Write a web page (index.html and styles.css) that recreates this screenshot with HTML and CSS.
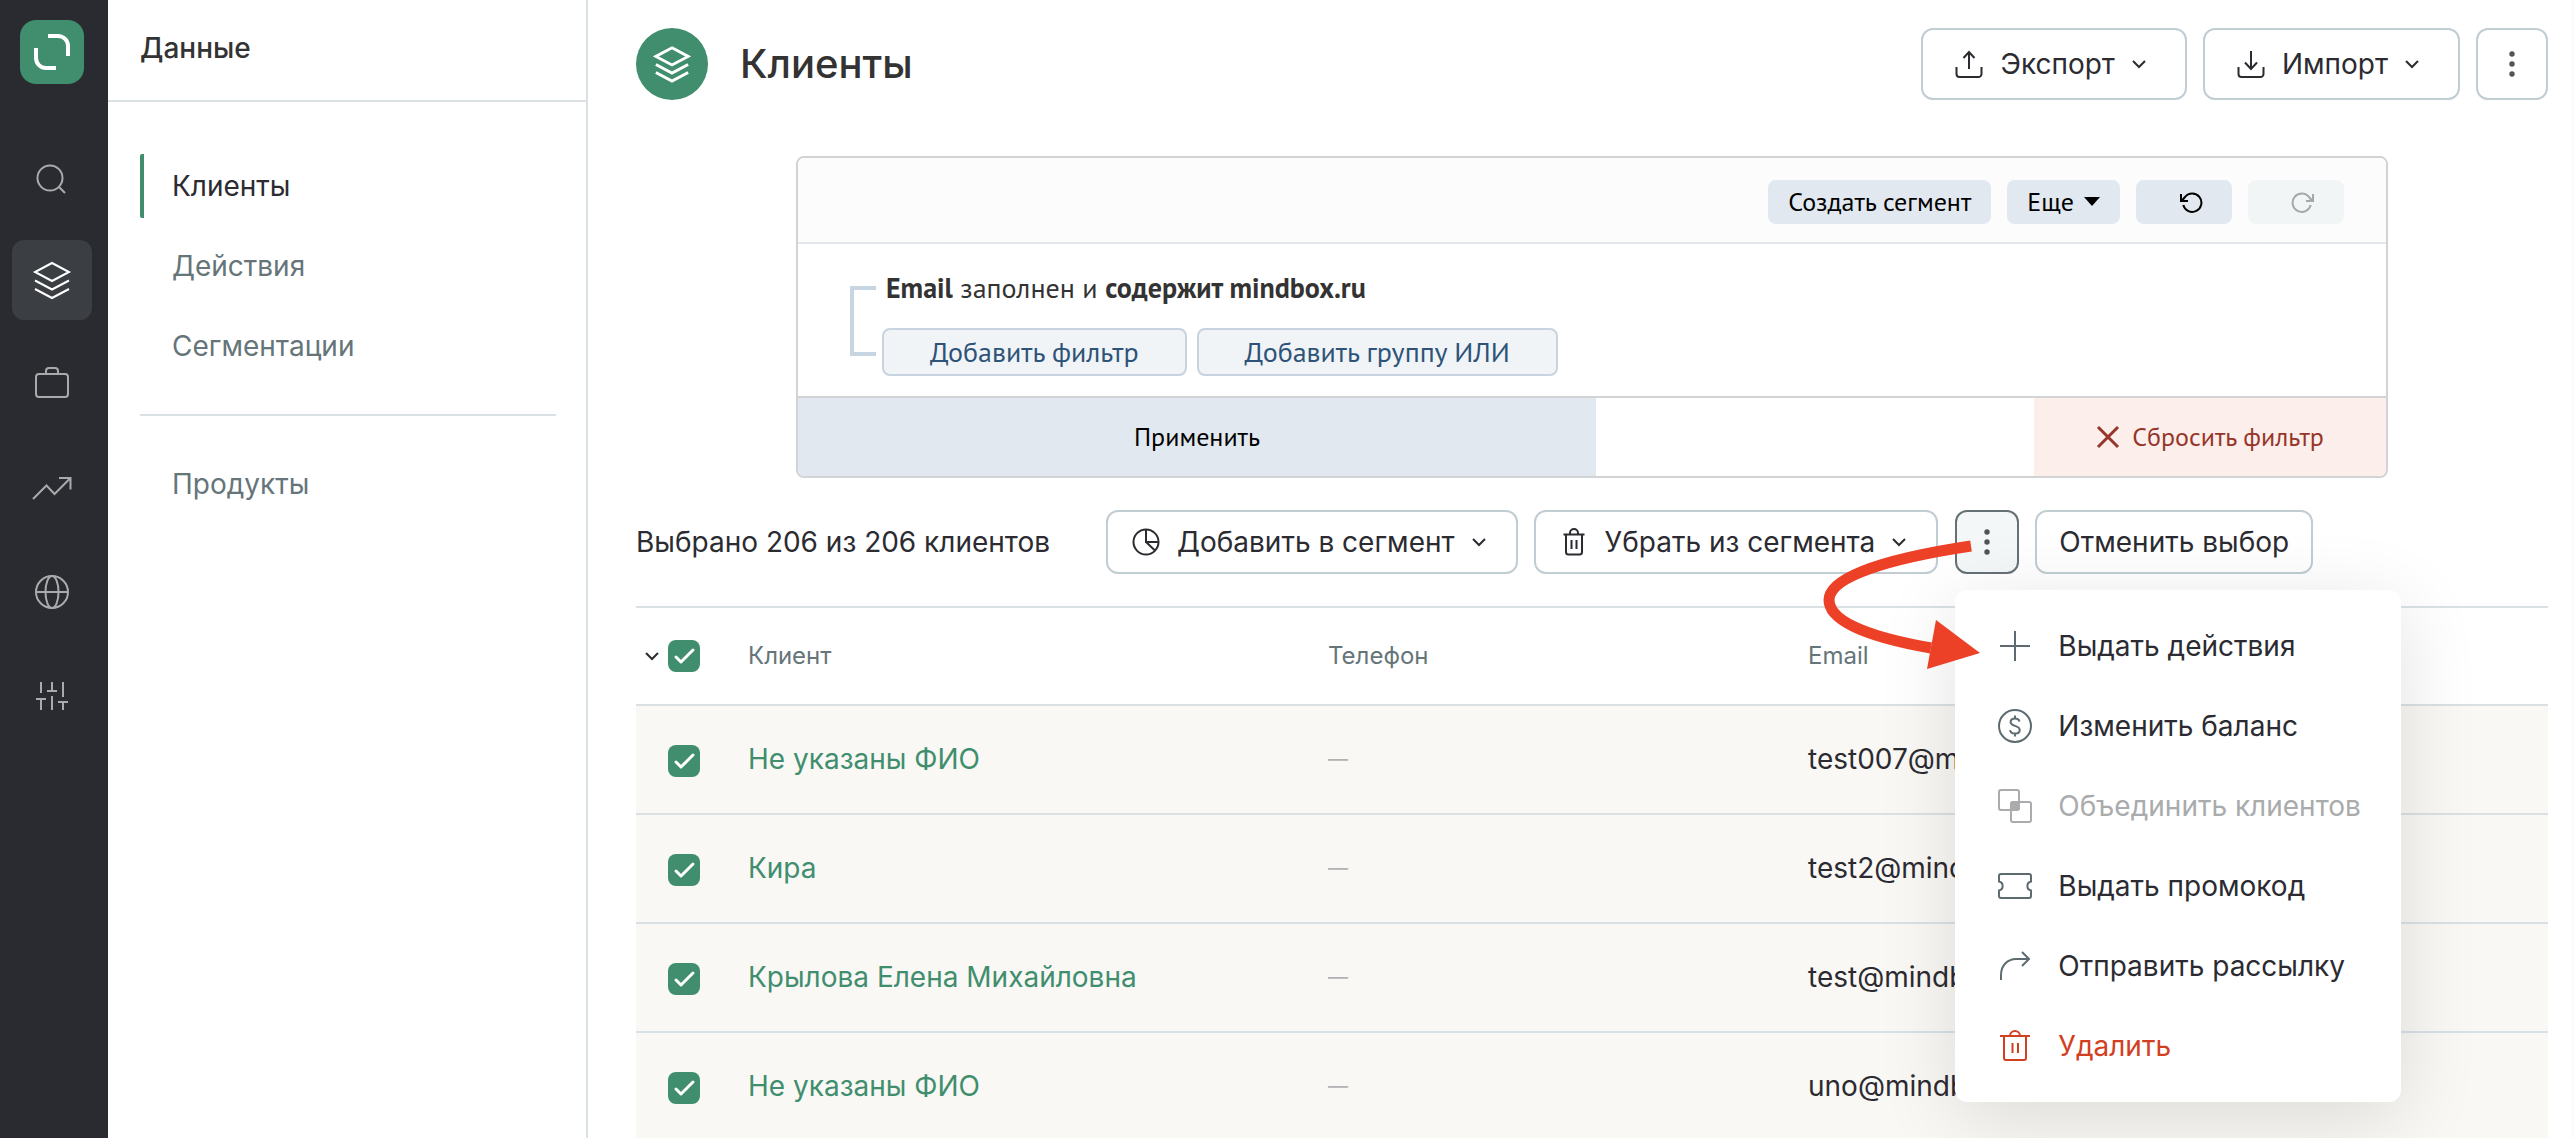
FILE: index.html
```html
<!DOCTYPE html>
<html lang="ru">
<head>
<meta charset="utf-8">
<title>Клиенты</title>
<link rel="stylesheet" href="styles.css">
</head>
<body>
<svg class="sprite" aria-hidden="true">
  <symbol id="layers" viewBox="0 0 40 40"><path d="M20 3 37 12 20 21 3 12ZM3 20.500 20 29.500 37 20.500M3 29 20 38 37 29"/></symbol>
  <symbol id="chevron" viewBox="0 0 16 16"><path d="m2 5 6 6 6-6"/></symbol>
  <symbol id="kebab" viewBox="0 0 32 32"><circle cx="16" cy="6" r="2.700"/><circle cx="16" cy="16" r="2.700"/><circle cx="16" cy="26" r="2.700"/></symbol>
</svg>
<div class="app">
  <nav class="rail" aria-label="Разделы">
    <a class="logo" href="#" aria-label="Mindbox"><svg viewBox="0 0 64 64"><path d="M28 16h10a10 10 0 0 1 10 10v10M16 28v10a10 10 0 0 0 10 10h10"/></svg></a>
    <a class="rail-item" href="#" aria-label="Поиск"><svg class="icon" viewBox="0 0 40 40"><circle cx="18" cy="22" r="12.500"/><path d="m27 31 6 6"/></svg></a>
    <a class="rail-item active" href="#" aria-label="Данные"><svg class="icon" viewBox="0 0 40 40"><use href="#layers"/></svg></a>
    <a class="rail-item" href="#" aria-label="Кампании"><svg class="icon" viewBox="0 0 40 40"><rect x="4" y="10" width="32" height="23" rx="3"/><path d="M14 10V7a3 3 0 0 1 3-3h6a3 3 0 0 1 3 3v3"/></svg></a>
    <a class="rail-item" href="#" aria-label="Отчеты"><svg class="icon" viewBox="0 0 40 40"><path d="M1 31 14.500 17.500 22.500 26 38 10.500M27 10h11.500v11.500"/></svg></a>
    <a class="rail-item" href="#" aria-label="Интеграции"><svg class="icon" viewBox="0 0 40 40"><circle cx="20" cy="20" r="16"/><ellipse cx="20" cy="20" rx="6.500" ry="16"/><path d="M4 20h32"/></svg></a>
    <a class="rail-item" href="#" aria-label="Настройки"><svg class="icon" viewBox="0 0 40 40"><path d="M9 6v11M9 23v11M4 23h10M20 6v9M20 20v14M15 15h10M31 6v15M31 26v8M26 26h10"/></svg></a>
  </nav>

  <aside class="panel">
    <h2 class="panel-title">Данные</h2>
    <ul class="menu">
      <li><a class="menu-link current" href="#">Клиенты</a></li>
      <li><a class="menu-link" href="#">Действия</a></li>
      <li><a class="menu-link" href="#">Сегментации</a></li>
    </ul>
    <ul class="menu second">
      <li><a class="menu-link" href="#">Продукты</a></li>
    </ul>
  </aside>

  <main class="main">
    <header class="page-head">
      <span class="badge"><svg viewBox="0 0 40 40"><use href="#layers"/></svg></span>
      <h1 class="title">Клиенты</h1>
      <div class="head-actions">
        <button class="btn large"><svg class="icon28" viewBox="0 0 28 28"><path d="M14 19V2M8.500 8 14 2l5.500 6M1.500 17v7a3 3 0 0 0 3 3h19a3 3 0 0 0 3-3v-7"/></svg>Экспорт<svg class="chev" viewBox="0 0 16 16"><use href="#chevron"/></svg></button>
        <button class="btn large"><svg class="icon28" viewBox="0 0 28 28"><path d="M14 1v18M8 12.500l6 6.500 6-6.500M1.500 17v7a3 3 0 0 0 3 3h19a3 3 0 0 0 3-3v-7"/></svg>Импорт<svg class="chev" viewBox="0 0 16 16"><use href="#chevron"/></svg></button>
        <button class="btn large more" aria-label="Еще действия"><svg class="dots" viewBox="0 0 32 32"><use href="#kebab"/></svg></button>
      </div>
    </header>

    <section class="filter" aria-label="Фильтр">
      <div class="filter-head">
        <button class="chip">Создать сегмент</button>
        <button class="chip">Еще<svg class="caret" viewBox="0 0 16 10"><path d="M0 0h16L8 9Z"/></svg></button>
        <button class="chip undo" aria-label="Отменить"><svg class="turn" viewBox="0 0 24 24"><path d="M2 4v7h7M3 10.500 6 7A9.200 9.200 0 1 1 4.300 15"/></svg></button>
        <button class="chip undo" aria-label="Повторить" disabled><svg class="turn" viewBox="0 0 24 24"><path d="M22 4v7h-7M21 10.500 18 7A9.200 9.200 0 1 0 19.700 15"/></svg></button>
      </div>
      <div class="filter-body">
        <span class="bracket"></span>
        <div class="rules">
          <p class="rule"><b>Email</b> заполнен и <b>содержит mindbox.ru</b></p>
          <div class="rule-actions">
            <button class="add">Добавить фильтр</button>
            <button class="add">Добавить группу ИЛИ</button>
          </div>
        </div>
      </div>
      <div class="filter-foot">
        <button class="apply">Применить</button>
        <button class="reset"><svg class="cross" viewBox="0 0 24 24"><path d="m2 2 20 20M22 2 2 22"/></svg>Сбросить фильтр</button>
      </div>
    </section>

    <div class="bulk">
      <p class="count">Выбрано 206 из 206 клиентов</p>
      <button class="btn"><svg class="icon28" viewBox="0 0 28 28"><circle cx="14" cy="14" r="12.500"/><path d="M14 1.500V14h12.500M14 14l9 8.500"/></svg>Добавить в сегмент<svg class="chev" viewBox="0 0 16 16"><use href="#chevron"/></svg></button>
      <button class="btn"><svg class="icon28" viewBox="0 0 28 28"><path d="M3.500 6.500h21M6 6.500V24a2.500 2.500 0 0 0 2.500 2.500h11A2.500 2.500 0 0 0 22 24V6.500M10 6.500V5a4 4 0 0 1 8 0v1.500M11.500 12v9M16.500 12v9"/></svg>Убрать из сегмента<svg class="chev" viewBox="0 0 16 16"><use href="#chevron"/></svg></button>
      <div class="dropdown">
        <button class="btn more open" aria-label="Другие действия" aria-expanded="true"><svg class="dots" viewBox="0 0 32 32"><use href="#kebab"/></svg></button>
        <div class="popup" role="menu">
          <button class="option" role="menuitem"><svg class="icon" viewBox="0 0 40 40"><path d="M20 5v30M5 20h30"/></svg>Выдать действия</button>
          <button class="option" role="menuitem"><svg class="icon" viewBox="0 0 40 40"><circle cx="20" cy="20" r="16"/><path d="M24.500 15.500c-.5-2-2-2.900-4.500-2.900s-4.400 1.400-4.400 3.500c0 2.300 1.900 3.100 4.400 3.800 2.700.8 4.700 1.600 4.700 4 0 2.200-1.900 3.600-4.700 3.600-2.700 0-4.600-1.200-4.900-3.400M20 9.500v3M20 27.500v3"/></svg>Изменить баланс</button>
          <button class="option" role="menuitem" disabled><svg class="icon" viewBox="0 0 40 40"><rect x="4" y="4" width="20" height="20" rx="2"/><rect x="16" y="16" width="20" height="20" rx="2"/><path class="solid" d="M16 24v-5a3 3 0 0 1 3-3h5v5a3 3 0 0 1-3 3Z"/></svg>Объединить клиентов</button>
          <button class="option" role="menuitem"><svg class="icon" viewBox="0 0 40 40"><path d="M6 8h28a2 2 0 0 1 2 2v5.500a4.600 4.600 0 0 0 0 9V30a2 2 0 0 1-2 2H6a2 2 0 0 1-2-2v-5.500a4.600 4.600 0 0 0 0-9V10a2 2 0 0 1 2-2Z"/></svg>Выдать промокод</button>
          <button class="option" role="menuitem"><svg class="icon" viewBox="0 0 40 40"><path d="M6 34v-5C6 19 13 13 21 13h13M27 6l7 7-7 7"/></svg>Отправить рассылку</button>
          <button class="option danger" role="menuitem"><svg class="icon" viewBox="0 0 40 40"><path d="M5 10h30M9 10v22a2 2 0 0 0 2 2h18a2 2 0 0 0 2-2V10M15 10a5 5 0 0 1 10 0M17.500 17v10M23 17v10"/></svg>Удалить</button>
        </div>
        <svg class="pointer" viewBox="0 0 160 140" aria-hidden="true"><path class="shaft" d="M146 36C66 48 4 66 4 90C4 114 54 129 106 138"/><path class="head" d="M111 110 155 143 102 159Z"/></svg>
      </div>
      <button class="btn">Отменить выбор</button>
    </div>

    <table class="clients">
      <thead>
        <tr>
          <th class="pick"><div class="pick-all"><svg class="chev" viewBox="0 0 16 16"><use href="#chevron"/></svg><input type="checkbox" aria-label="Выбрать всех" checked></div></th>
          <th class="name">Клиент</th>
          <th class="phone">Телефон</th>
          <th>Email</th>
        </tr>
      </thead>
      <tbody>
        <tr><td><input type="checkbox" aria-label="Не указаны ФИО, test007" checked></td><td><a href="#">Не указаны ФИО</a></td><td class="none">—</td><td>test007@mindbox.ru</td></tr>
        <tr><td><input type="checkbox" aria-label="Кира" checked></td><td><a href="#">Кира</a></td><td class="none">—</td><td>test2@mindbox.ru</td></tr>
        <tr><td><input type="checkbox" aria-label="Крылова Елена Михайловна" checked></td><td><a href="#">Крылова Елена Михайловна</a></td><td class="none">—</td><td>test@mindbox.ru</td></tr>
        <tr><td><input type="checkbox" aria-label="Не указаны ФИО, uno" checked></td><td><a href="#">Не указаны ФИО</a></td><td class="none">—</td><td>uno@mindbox.ru</td></tr>
      </tbody>
    </table>
  </main>
</div>
</body>
</html>
```
FILE: styles.css
```css
:root {
  --green: #408e6e;
  --ink: #2b2b31;
  --muted: #667579;
  --line: #dae1e5;
  --outline: #c1ccd3;
}

* { box-sizing: border-box; }

body {
  margin: 0;
  background: #fff;
  color: var(--ink);
  font: 28px/36px Inter, "Liberation Sans", sans-serif;
  overflow: hidden;
}

h1, h2, p, ul { margin: 0; padding: 0; }
ul { list-style: none; }
a { color: inherit; text-decoration: none; }
button { font: inherit; color: inherit; margin: 0; cursor: pointer; }
svg { display: block; flex: none; fill: none; stroke: currentColor; stroke-width: 2; }
.sprite { width: 0; height: 0; position: absolute; }

.app { display: flex; height: 100vh; }

/* Dark icon rail */
.rail {
  flex: none;
  width: 108px;
  padding: 20px 12px;
  background: #2a2b30;
  color: #a9aaac;
  display: flex;
  flex-direction: column;
  gap: 24px;
}
.logo {
  width: 64px;
  height: 64px;
  margin: 0 8px 28px;
  border-radius: 16px;
  background: var(--green);
  color: #fff;
}
.logo svg { stroke-width: 4; }
.rail-item {
  width: 80px;
  height: 80px;
  border-radius: 12px;
  display: grid;
  place-items: center;
}
.rail-item.active { background: #3b3e43; color: #fff; }
.icon { width: 40px; height: 40px; }

/* Section panel */
.panel {
  flex: none;
  width: 480px;
  border-right: 2px solid var(--line);
}
.panel-title {
  height: 102px;
  padding: 30px 32px;
  border-bottom: 2px solid var(--line);
  font-size: 28px;
  font-weight: 500;
  color: #333;
}
.menu {
  margin: 0 30px 0 32px;
  padding: 52px 0 36px;
  display: flex;
  flex-direction: column;
  gap: 16px;
}
.menu.second { border-top: 2px solid var(--line); padding: 36px 0; }
.menu-link {
  display: block;
  padding: 14px 28px;
  border-left: 4px solid transparent;
  border-radius: 2px;
  color: var(--muted);
}
.menu-link.current { border-color: var(--green); color: var(--ink); }

/* Main column */
.main {
  flex: 1;
  min-width: 0;
  padding: 28px 24px 0 48px;
  border-right: 2px solid #fafafa;
}
.page-head { display: flex; align-items: center; }
.badge {
  width: 72px;
  height: 72px;
  border-radius: 50%;
  background: var(--green);
  color: #fff;
  display: grid;
  place-items: center;
}
.badge svg { width: 38px; height: 38px; stroke-width: 3; }
.title { margin-left: 32px; font-size: 40px; line-height: 48px; font-weight: 500; color: #333; }
.head-actions { display: flex; gap: 16px; margin-left: auto; }

.btn {
  height: 64px;
  padding: 0 22px;
  border: 2px solid var(--outline);
  border-radius: 12px;
  background: #fff;
  display: flex;
  align-items: center;
  white-space: nowrap;
}
.btn.large { height: 72px; padding: 0 30px; }
.icon28 { width: 28px; height: 28px; margin: 0 17px 0 2px; }
.chev { width: 16px; height: 16px; margin: 0 8px 0 16px; }
.btn.more { width: 64px; padding: 0; justify-content: center; }
.btn.more.large { width: 72px; }
.btn.open { background: #f3f7f8; border-color: #667176; }
.dots { width: 32px; height: 32px; fill: #505457; stroke: none; }

/* Filter builder */
.filter {
  max-width: 1592px;
  margin: 56px auto 32px;
  border: 2px solid #d2d3d4;
  border-radius: 8px;
  overflow: hidden;
  font-family: "PT Sans", "Noto Sans", sans-serif;
  font-size: 26px;
}
.filter-head {
  display: flex;
  justify-content: flex-end;
  gap: 16px;
  padding: 22px 42px 18px;
  background: #fcfcfc;
  border-bottom: 2px solid #e2e8ee;
}
.chip {
  height: 44px;
  padding: 0 20px;
  border: 0;
  border-radius: 8px;
  background: #e2e8ef;
  color: #000;
  display: flex;
  align-items: center;
}
.caret { width: 16px; height: 10px; margin-left: 10px; fill: #000; stroke: none; }
.undo { width: 96px; padding: 0 0 0 14px; justify-content: center; }
.undo:disabled { background: #f2f5f6; color: #a5a8aa; }
.turn { width: 24px; height: 24px; }
.filter-body { display: flex; padding: 26px 52px 20px; font-size: 28px; }
.bracket {
  width: 26px;
  height: 70px;
  margin: 16px 6px 0 0;
  border: solid #c7d4e2;
  border-width: 4px 0 4px 4px;
}
.rule { padding-left: 4px; color: #333; }
.rule-actions { display: flex; gap: 10px; margin-top: 22px; }
.add {
  height: 48px;
  padding: 0 46px;
  border: 2px solid #c7d4e0;
  border-radius: 8px;
  background: #f1f4f7;
  color: #2e5378;
}
.filter-foot { display: flex; justify-content: space-between; height: 80px; border-top: 2px solid #d2d3d4; }
.apply, .reset { border: 0; }
.apply { width: calc(50% + 4px); background: #e2e8ef; color: #000; }
.reset {
  width: 352px;
  background: #fceeea;
  color: #97352a;
  display: flex;
  align-items: center;
  justify-content: center;
  gap: 12px;
}
.cross { width: 24px; height: 24px; stroke-width: 3; }

/* Bulk actions */
.bulk { display: flex; align-items: center; gap: 16px; }
.count { margin-right: 40px; white-space: nowrap; }
.bulk .chev { margin-right: 7px; }
.dropdown { position: relative; margin-left: 1px; }
.popup {
  position: absolute;
  z-index: 2;
  top: 80px;
  left: 0;
  padding: 16px 0;
  border-radius: 12px;
  background: #fff;
  box-shadow: 0 16px 80px rgba(0, 0, 0, .12);
}
.option {
  width: 100%;
  height: 80px;
  padding: 0 40px;
  border: 0;
  background: none;
  display: flex;
  align-items: center;
  gap: 23px;
  white-space: nowrap;
}
.option .icon { color: #5d6b70; }
.option:disabled, .option:disabled .icon { color: #a9abac; }
.solid { fill: currentColor; }
.option.danger, .option.danger .icon { color: #d1401f; }
.pointer {
  position: absolute;
  z-index: 3;
  top: 0;
  left: -130px;
  width: 160px;
  height: 140px;
  overflow: visible;
  pointer-events: none;
}
.shaft { stroke: #ec4126; stroke-width: 11; }
.head { fill: #ec4126; stroke: none; }

/* Clients table */
.clients {
  width: 100%;
  margin-top: 32px;
  border-collapse: separate;
  border-spacing: 0;
  border-top: 2px solid var(--line);
  table-layout: fixed;
}
th, td { padding: 0; text-align: left; border-bottom: 2px solid var(--line); }
th { height: 98px; font-size: 24px; font-weight: 400; color: var(--muted); }
td { height: 109px; padding-bottom: 2px; background: #f9f8f5; }
.pick { width: 112px; }
.name { width: 580px; }
.phone { width: 480px; }
td:first-child { padding: 2px 0 0 32px; }
.pick-all { display: flex; align-items: center; color: var(--ink); }
.pick-all .chev { margin: 0 8px; }
td a { color: var(--green); }
.none { font-size: 20px; color: #b0b2b3; }
input[type="checkbox"] {
  appearance: none;
  display: block;
  width: 32px;
  height: 32px;
  margin: 0;
  border-radius: 8px;
  background: var(--green) url("data:image/svg+xml,%3Csvg xmlns='http://www.w3.org/2000/svg' viewBox='0 0 32 32' fill='none' stroke='white' stroke-width='3' stroke-linecap='round' stroke-linejoin='round'%3E%3Cpath d='m8 17 5 5L25 10'/%3E%3C/svg%3E");
}
```
